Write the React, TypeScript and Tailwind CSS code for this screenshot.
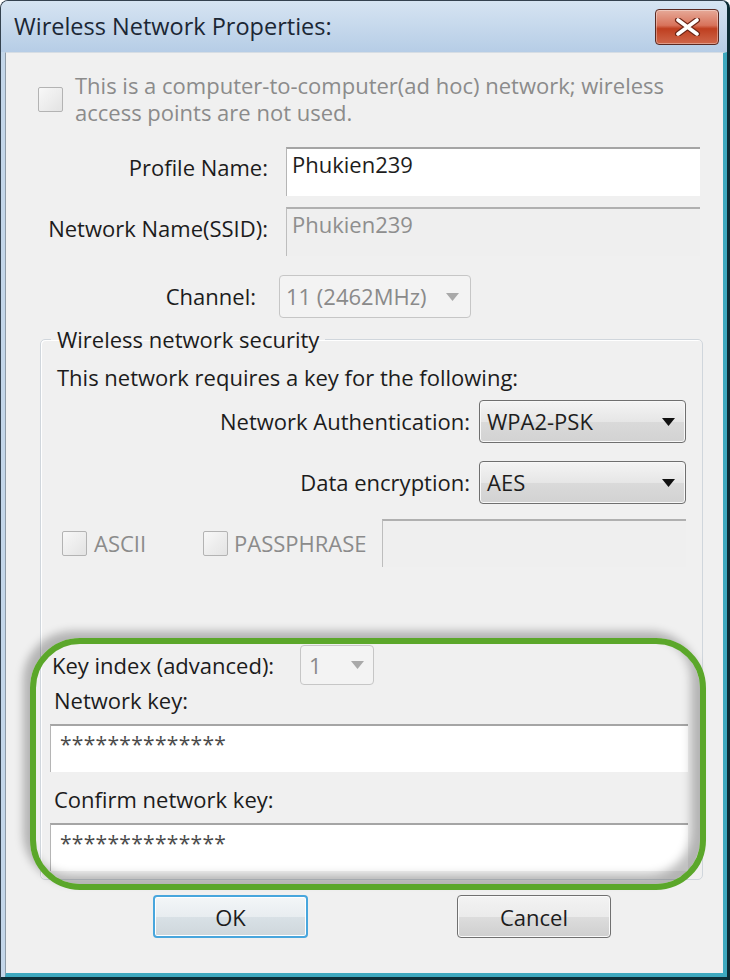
import React from "react";

const Check = () => (
  <div className="w-[25px] h-[25px] shrink-0 rounded-[2px] border border-[#b3b3b3] bg-gradient-to-br from-[#f8f8f8] to-[#e3e3e3]" />
);

const Arrow = ({ dim }: { dim?: boolean }) => (
  <svg width="13" height="8" viewBox="0 0 13 8" className="shrink-0">
    <path d="M0 0H13L6.5 8Z" fill={dim ? "#a9a9a9" : "#111111"} />
  </svg>
);

const CloseButton = () => (
  <div className="w-[64px] h-[36px] rounded-[4px] border border-[#5b2a22] bg-[linear-gradient(#e6a998_0%,#d8735b_45%,#bf3f20_55%,#cf674b_100%)] flex items-center justify-center shadow-[inset_0_0_0_1px_rgba(255,255,255,0.35)]">
    <svg width="27" height="18" viewBox="0 0 27 18">
      <path d="M4 2L23 16M23 2L4 16" stroke="#6e2516" strokeWidth="6" strokeLinecap="round" />
      <path d="M4 2L23 16M23 2L4 16" stroke="#ffffff" strokeWidth="3.6" strokeLinecap="round" />
    </svg>
  </div>
);

export default function App() {
  return (
    <div className="relative w-[730px] h-[980px] flex flex-col overflow-hidden rounded-t-[8px] border-l border-t border-[#34424f] border-r-[3px] border-r-[#0c2c35] border-b-[3px] border-b-[#0c2c35] bg-[#c3d6e9] font-['Segoe_UI','Open_Sans',sans-serif] text-[22px] text-[#1c1c1c]">
      {/* title bar */}
      <div className="h-[51px] shrink-0 flex items-center justify-between pl-[13px] pr-[8px] bg-gradient-to-b from-[#d6e4f2] to-[#b6cde6]">
        <span className="text-[23.5px] text-[#1b2735] leading-none">Wireless Network Properties:</span>
        <CloseButton />
      </div>

      <div className="flex-1 flex flex-col pl-[4px]">
        <div className="flex-1 flex flex-col bg-[#f0f0f0] border-l border-l-[#8e9ba7] border-t border-t-[#d6dde4] border-r-[4px] border-r-[#3da8be] border-b-[4px] border-b-[#3da8be]">
          {/* ad hoc checkbox */}
          <div className="flex items-start mt-[19px] ml-[32px]">
            <div className="mt-[15px]">
              <Check />
            </div>
            <div className="ml-[12px] leading-[27px] text-[#8b8b8b]">
              This is a computer-to-computer(ad hoc) network; wireless
              <br />
              access points are not used.
            </div>
          </div>

          {/* profile name */}
          <div className="flex items-start mt-[21px]">
            <div className="w-[262px] text-right leading-[27px] mt-[7px]">Profile Name:</div>
            <div className="ml-[18px] w-[414px] h-[49px] bg-white border-t-2 border-l border-t-[#a5a5a5] border-l-[#b5b5b5] pl-[5px] pt-[2px] leading-[27px]">
              Phukien239
            </div>
          </div>

          {/* ssid */}
          <div className="flex items-start mt-[11px]">
            <div className="w-[262px] text-right leading-[27px] mt-[8px]">Network Name(SSID):</div>
            <div className="ml-[18px] w-[414px] h-[49px] bg-[#efefef] border-t-2 border-l border-t-[#b0b0b0] border-l-[#bdbdbd] pl-[5px] pt-[2px] leading-[27px] text-[#8e8e8e]">
              Phukien239
            </div>
          </div>

          {/* channel */}
          <div className="flex items-center mt-[19px]">
            <div className="w-[250px] text-right leading-[27px]">Channel:</div>
            <div className="ml-[23px] w-[192px] h-[43px] rounded-[4px] border border-[#c6c6c6] bg-[#f3f3f3] flex items-center justify-between pl-[6px] pr-[11px] text-[#8a8a8a]">
              <span>11 (2462MHz)</span>
              <Arrow dim />
            </div>
          </div>

          {/* security group */}
          <fieldset className="ml-[34px] mt-[8px] w-[663px] rounded-[5px] border border-[#d0d6dc] shadow-[inset_1px_1px_0_#ffffff] pb-[8px]">
            <legend className="ml-[10px] px-[6px] leading-[27px]">Wireless network security</legend>
            <div className="mt-[11px] pl-[16px] leading-[27px]">This network requires a key for the following:</div>

            <div className="mt-[9px] flex items-center justify-end pr-[16px]">
              <span className="leading-[27px]">Network Authentication:</span>
              <div className="ml-[9px] w-[207px] h-[43px] rounded-[4px] border border-[#6f6f6f] bg-[linear-gradient(#f4f4f4,#e6e6e6_50%,#dadada_50%,#d2d2d2)] flex items-center justify-between pl-[7px] pr-[10px] text-[#1e1e1e] shadow-[inset_0_0_0_1px_#f8f8f8]">
                <span>WPA2-PSK</span>
                <Arrow />
              </div>
            </div>

            <div className="mt-[18px] flex items-center justify-end pr-[16px]">
              <span className="leading-[27px]">Data encryption:</span>
              <div className="ml-[9px] w-[207px] h-[43px] rounded-[4px] border border-[#6f6f6f] bg-[linear-gradient(#f4f4f4,#e6e6e6_50%,#dadada_50%,#d2d2d2)] flex items-center justify-between pl-[7px] pr-[10px] text-[#1e1e1e] shadow-[inset_0_0_0_1px_#f8f8f8]">
                <span>AES</span>
                <Arrow />
              </div>
            </div>

            <div className="mt-[15px] flex items-center pl-[21px] text-[#8b8b8b]">
              <div className="w-[141px] flex items-center">
                <Check />
                <span className="ml-[7px] leading-[27px]">ASCII</span>
              </div>
              <Check />
              <span className="ml-[6px] leading-[27px]">PASSPHRASE</span>
              <div className="ml-auto mr-[16px] w-[304px] h-[48px] bg-[#efefef] border-t-2 border-l border-t-[#b0b0b0] border-l-[#bdbdbd]" />
            </div>

            <div className="mt-[78px] flex items-center pl-[11px]">
              <span className="w-[248px] leading-[27px]">Key index (advanced):</span>
              <div className="w-[74px] h-[40px] rounded-[4px] border border-[#c6c6c6] bg-[#f3f3f3] flex items-center justify-between pl-[8px] pr-[9px] text-[#8a8a8a]">
                <span>1</span>
                <Arrow dim />
              </div>
            </div>

            <div className="mt-[2px] pl-[13px] leading-[27px]">Network key:</div>
            <div className="mt-[10px] ml-[9px] w-[638px] h-[48px] bg-white border-t-2 border-l border-t-[#a5a5a5] border-l-[#b5b5b5] pl-[9px] pt-[5px] leading-[27px] text-[#4b4b4b] text-[21px] tracking-[0.3px]">
              **************
            </div>

            <div className="mt-[14px] pl-[13px] leading-[27px]">Confirm network key:</div>
            <div className="mt-[10px] ml-[9px] w-[638px] h-[48px] bg-white border-t-2 border-l border-t-[#a5a5a5] border-l-[#b5b5b5] pl-[9px] pt-[5px] leading-[27px] text-[#4b4b4b] text-[21px] tracking-[0.3px]">
              **************
            </div>
          </fieldset>

          {/* buttons */}
          <div className="mt-[15px] flex">
            <button className="ml-[147px] w-[155px] h-[43px] rounded-[4px] border-2 border-[#48a6dd] bg-[linear-gradient(#f3f6f8,#e8edf0_50%,#d9e1e6_50%,#ced7dc)] shadow-[inset_0_0_0_1px_#ffffff] text-[#1c1c1c] leading-none">
              OK
            </button>
            <button className="ml-[149px] w-[154px] h-[43px] rounded-[4px] border border-[#707070] bg-[linear-gradient(#f3f3f3,#ebebeb_50%,#dddddd_50%,#cfcfcf)] shadow-[inset_0_0_0_1px_#fafafa] text-[#1c1c1c] leading-none">
              Cancel
            </button>
          </div>
        </div>
      </div>

      {/* green highlight around key fields */}
      <div className="pointer-events-none absolute left-[29px] top-[637px] w-[676px] h-[252px] rounded-[50px] border-[6px] border-[#5ba72a] shadow-[-7px_-7px_8px_rgba(0,0,0,0.25),inset_-9px_-9px_10px_rgba(0,0,0,0.25)]" />
    </div>
  );
}
